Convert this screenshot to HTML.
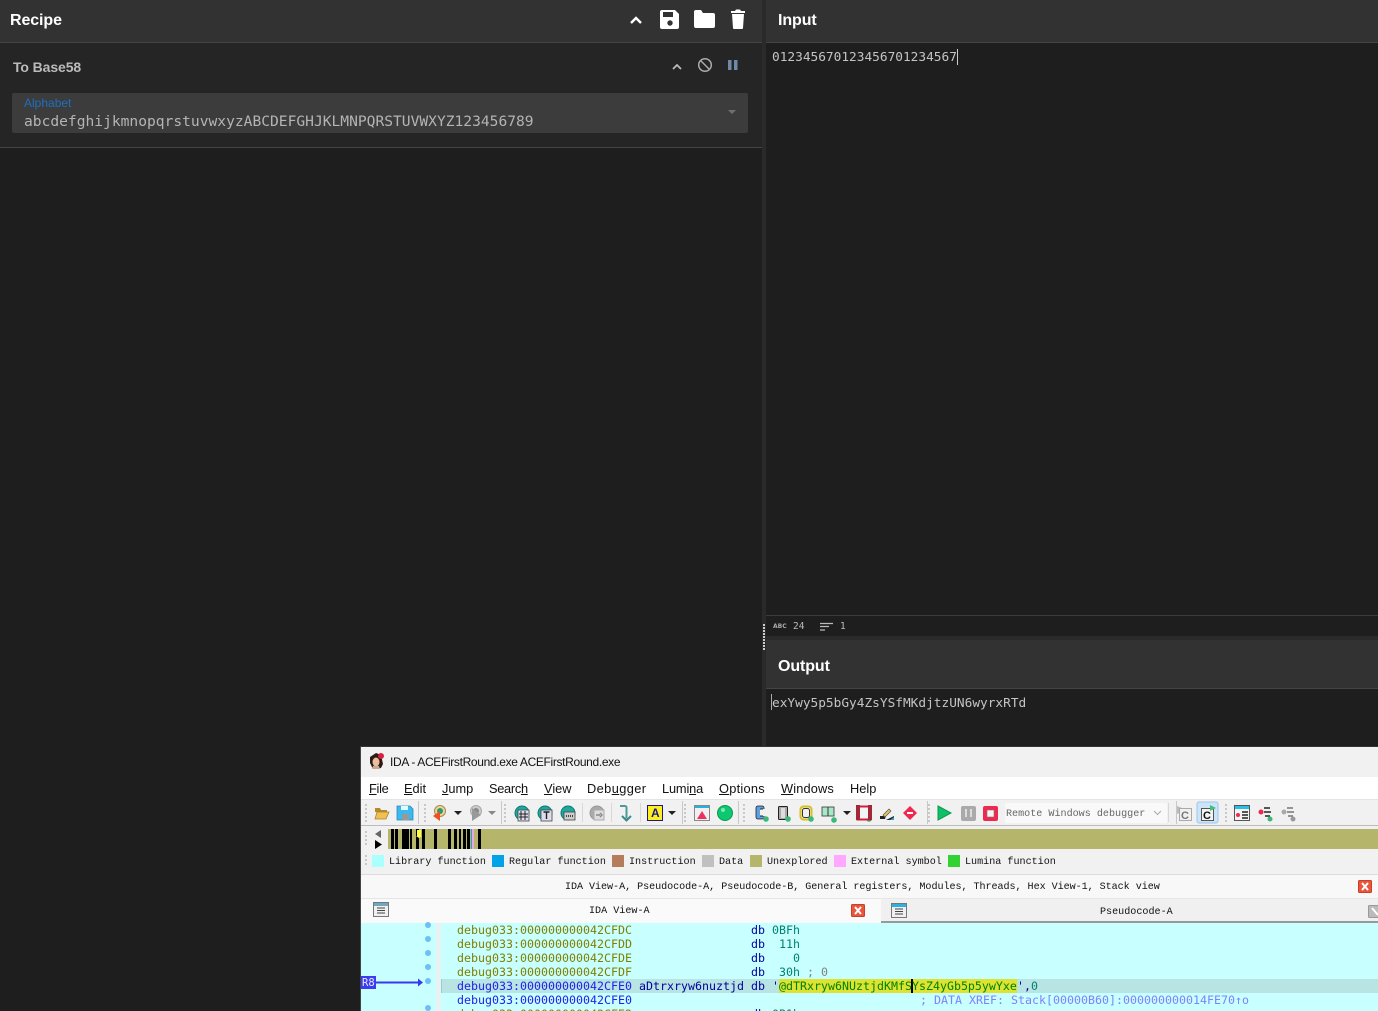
<!DOCTYPE html>
<html><head><meta charset="utf-8"><style>
html,body{margin:0;padding:0;width:1378px;height:1011px;overflow:hidden;background:#1e1e1e}
#w{position:relative;width:1378px;height:1011px;overflow:hidden;background:#1e1e1e}
.a{position:absolute}
.t{position:absolute;white-space:pre;line-height:1}
.h{font:bold 16px "Liberation Sans",sans-serif;color:#fff}
.m{font-family:"DejaVu Sans Mono",monospace}
.s{font-family:"Liberation Mono",monospace;font-size:10.1px;color:#111}
.mn{font:12.8px "Liberation Sans",sans-serif;color:#111}
.mn u{text-underline-offset:1px}
.c{font-family:"DejaVu Sans Mono",monospace;font-size:11.63px;line-height:14px;position:absolute;white-space:pre;height:14px}
.sw{position:absolute;width:12px;height:12px;top:855px}
svg{position:absolute;overflow:hidden}
</style></head><body><div id="w">
<div class="a" style="left:0;top:0;width:762px;height:42px;background:#323232"></div>
<div class="a" style="left:0;top:42px;width:762px;height:1px;background:#444"></div>
<div class="a" style="left:0;top:43px;width:762px;height:104px;background:#252525"></div>
<div class="a" style="left:0;top:147px;width:762px;height:1px;background:#444"></div>
<div class="a" style="left:762px;top:0;width:4px;height:747px;background:#2a2a2a"></div>
<div class="a" style="left:766px;top:0;width:612px;height:42px;background:#323232"></div>
<div class="a" style="left:766px;top:42px;width:612px;height:1px;background:#444"></div>
<div class="t h" style="left:10px;top:12px;letter-spacing:-.1px">Recipe</div>
<div class="t h" style="left:778px;top:12px;letter-spacing:-.1px">Input</div>
<svg style="left:0;top:0" width="762" height="150">
<path d="M631 23l5-5 5 5" fill="none" stroke="#fff" stroke-width="2.400"/>
<path d="M662 10h13l4 4v13a2 2 0 0 1-2 2h-15a2 2 0 0 1-2-2v-15a2 2 0 0 1 2-2z" fill="#fff"/><rect x="663" y="12" width="10" height="5" fill="#323232"/><circle cx="670" cy="23" r="2.700" fill="#323232"/>
<path d="M694 12a2 2 0 0 1 2-2h5l2 3h10a2 2 0 0 1 2 2v11a2 2 0 0 1-2 2h-17a2 2 0 0 1-2-2z" fill="#fff"/>
<path d="M731 11h4l1-1.500h4l1 1.500h4v2h-14zM732 14h12l-1 14a1 1 0 0 1-1 1h-8a1 1 0 0 1-1-1z" fill="#fff"/>
<path d="M673 69l4-4 4 4" fill="none" stroke="#bbb" stroke-width="1.800"/>
<circle cx="705" cy="65" r="6.300" fill="none" stroke="#aaa" stroke-width="1.500"/><path d="M700.500 60.500l9 9" stroke="#aaa" stroke-width="1.500"/>
<rect x="728" y="60" width="3.500" height="10" fill="#6f8aa8"/><rect x="734" y="60" width="3.500" height="10" fill="#6f8aa8"/>
</svg>
<div class="t" style="left:13px;top:59px;font:bold 14px 'Liberation Sans',sans-serif;color:#bbb;letter-spacing:-.1px">To Base58</div>
<div class="a" style="left:12px;top:93px;width:736px;height:40px;background:#3c3c3c;border-radius:2px"></div>
<div class="t" style="left:24px;top:96px;font:12px 'Liberation Sans',sans-serif;color:#1f6fc0">Alphabet</div>
<div class="t m" style="left:24px;top:115px;font-size:14.600px;color:#b4b4b4">abcdefghijkmnopqrstuvwxyzABCDEFGHJKLMNPQRSTUVWXYZ123456789</div>
<svg style="left:728px;top:110px" width="10" height="5"><path d="M0 0h8l-4 4z" fill="#6e6e78"/></svg>
<div class="t m" style="left:772px;top:52px;font-size:12.800px;color:#c4c4c4">012345670123456701234567</div>
<div class="a" style="left:957px;top:49px;width:1px;height:16px;background:#ccc"></div>
<div class="a" style="left:766px;top:615px;width:612px;height:1px;background:#3c3c3c"></div>
<div class="t" style="left:773px;top:623px;font:bold 6px 'DejaVu Sans',sans-serif;color:#aaa">ABC</div>
<div class="t m" style="left:793px;top:622px;font-size:9.500px;color:#bbb">24</div>
<svg style="left:820px;top:622px" width="14" height="10"><path d="M0 1.500h13M0 4.500h9M0 8h5" stroke="#bbb" stroke-width="1.200"/></svg>
<div class="t m" style="left:840px;top:622px;font-size:9.500px;color:#bbb">1</div>
<div class="a" style="left:766px;top:636px;width:612px;height:4px;background:#2a2a2a"></div>
<div class="a" style="left:763px;top:624px;width:2px;height:2px;background:#ccc;box-shadow:0 3px #ccc,0 6px #ccc,0 9px #ccc,0 12px #ccc,0 15px #ccc,0 18px #ccc,0 21px #ccc,0 24px #ccc"></div>
<div class="a" style="left:766px;top:640px;width:612px;height:48px;background:#323232"></div>
<div class="a" style="left:766px;top:688px;width:612px;height:1px;background:#444"></div>
<div class="t h" style="left:778px;top:658px;letter-spacing:-.1px">Output</div>
<div class="a" style="left:771px;top:694px;width:1px;height:16px;background:#aaa"></div>
<div class="t m" style="left:772px;top:698px;font-size:12.800px;color:#c4c4c4">exYwy5p5bGy4ZsYSfMKdjtzUN6wyrxRTd</div>

<!-- IDA window -->
<div class="a" style="left:360px;top:746px;width:1018px;height:265px;background:#f1f1f1;border-left:1px solid #444;border-top:1px solid #333;box-sizing:border-box"></div>
<svg style="left:368px;top:752px" width="18" height="18"><path d="M2 5l6-4 5 2 2 9-2 4-8 1-3-6z" fill="#2c1a14"/><ellipse cx="8" cy="10" rx="3.500" ry="4.500" fill="#e8c0a0"/><circle cx="13" cy="4" r="3" fill="#d8203c"/><path d="M5 14l6 0 1 3h-8z" fill="#c8a890"/></svg>
<div class="t" style="left:390px;top:755px;font:12px 'Liberation Sans',sans-serif;letter-spacing:-.34px;color:#111">IDA - ACEFirstRound.exe ACEFirstRound.exe</div>
<div class="a" style="left:361px;top:777px;width:1017px;height:22px;background:#fff"></div>
<div class="t mn" style="left:369px;top:781px;letter-spacing:-.3px"><u>F</u>ile</div>
<div class="t mn" style="left:404px;top:781px"><u>E</u>dit</div>
<div class="t mn" style="left:442px;top:781px"><u>J</u>ump</div>
<div class="t mn" style="left:489px;top:781px;letter-spacing:-.3px">Searc<u>h</u></div>
<div class="t mn" style="left:544px;top:781px"><u>V</u>iew</div>
<div class="t mn" style="left:587px;top:781px;letter-spacing:.4px">Deb<u>u</u>gger</div>
<div class="t mn" style="left:662px;top:781px;letter-spacing:-.15px">Lumi<u>n</u>a</div>
<div class="t mn" style="left:719px;top:781px;letter-spacing:.25px"><u>O</u>ptions</div>
<div class="t mn" style="left:781px;top:781px;letter-spacing:.15px"><u>W</u>indows</div>
<div class="t mn" style="left:850px;top:781px">Help</div>

<div class="a" style="left:361px;top:799px;width:1017px;height:1px;background:#e4e4e4"></div>
<div class="a" style="left:361px;top:825px;width:1017px;height:1px;background:#bcbcbc"></div>
<svg style="left:0;top:0" width="1378" height="1011">
<g stroke="#c8c8c8"><path d="M418.500 801v23M501.500 801v23M682.500 801v23M738.500 801v23M927.500 801v23M1176.500 801v23"/></g>
<g stroke="#d8d8d8"><path d="M582.500 803v19M611.500 803v19M640.500 803v19M1168.500 803v19"/></g>
<g fill="#bbb"><circle cx="366" cy="805" r="1"/><circle cx="366" cy="809" r="1"/><circle cx="366" cy="813" r="1"/><circle cx="366" cy="817" r="1"/><circle cx="366" cy="821" r="1"/>
<circle cx="425" cy="805" r="1"/><circle cx="425" cy="809" r="1"/><circle cx="425" cy="813" r="1"/><circle cx="425" cy="817" r="1"/><circle cx="425" cy="821" r="1"/>
<circle cx="505" cy="805" r="1"/><circle cx="505" cy="809" r="1"/><circle cx="505" cy="813" r="1"/><circle cx="505" cy="817" r="1"/><circle cx="505" cy="821" r="1"/>
<circle cx="685" cy="805" r="1"/><circle cx="685" cy="809" r="1"/><circle cx="685" cy="813" r="1"/><circle cx="685" cy="817" r="1"/><circle cx="685" cy="821" r="1"/>
<circle cx="744" cy="805" r="1"/><circle cx="744" cy="809" r="1"/><circle cx="744" cy="813" r="1"/><circle cx="744" cy="817" r="1"/><circle cx="744" cy="821" r="1"/>
<circle cx="929" cy="805" r="1"/><circle cx="929" cy="809" r="1"/><circle cx="929" cy="813" r="1"/><circle cx="929" cy="817" r="1"/><circle cx="929" cy="821" r="1"/>
<circle cx="1226" cy="805" r="1"/><circle cx="1226" cy="809" r="1"/><circle cx="1226" cy="813" r="1"/><circle cx="1226" cy="817" r="1"/><circle cx="1226" cy="821" r="1"/>
<circle cx="366" cy="832" r="1"/><circle cx="366" cy="836" r="1"/><circle cx="366" cy="840" r="1"/><circle cx="366" cy="844" r="1"/>
<circle cx="366" cy="856" r="1"/><circle cx="366" cy="860" r="1"/><circle cx="366" cy="864" r="1"/></g>
<path d="M375 808h5l1 2h6v2h-12z" fill="#b68a2c"/><path d="M375 819l2-7h12l-3 7z" fill="#f0c050" stroke="#a8822c" stroke-width=".8"/>
<path d="M397 806h13l3 3v11h-16z" fill="#3cb8ee" stroke="#238ac0" stroke-width=".8"/><rect x="401" y="806" width="7" height="4" fill="#dff"/><rect x="402" y="814" width="7" height="6" fill="#999"/>
<circle cx="440" cy="811" r="5.500" fill="#e8d8a0" stroke="#a88a40"/><circle cx="440" cy="811" r="3" fill="#2c9a70"/><path d="M433 816l7-5v10z" fill="#f05020"/>
<path d="M454 811h8l-4 4z" fill="#222"/>
<circle cx="476" cy="811" r="5.500" fill="#ccc" stroke="#aaa"/><circle cx="476" cy="811" r="3" fill="#888"/><path d="M472 808l9 7-9 6z" fill="#999"/>
<path d="M488 811h8l-4 4z" fill="#888"/>
<g fill="#1ea89e" stroke="#0c7a72"><circle cx="522" cy="813" r="7"/><circle cx="545" cy="813" r="7"/><circle cx="568" cy="813" r="7"/></g>
<rect x="518" y="810" width="11" height="11" fill="#dde" stroke="#444" stroke-width=".8"/><path d="M521 811v9M525 811v9M519 814h9M519 817h9" stroke="#222"/>
<rect x="541" y="810" width="11" height="11" fill="#dde" stroke="#444" stroke-width=".8"/><path d="M543.500 812h6M546.500 812v7" stroke="#222" stroke-width="1.400"/>
<rect x="564" y="812" width="11" height="8" fill="#ccc" stroke="#444" stroke-width=".8"/><path d="M566 816h7" stroke="#444" stroke-width="2" stroke-dasharray="1 1"/>
<circle cx="597" cy="813" r="7" fill="#aaa" stroke="#999"/><rect x="594" y="810" width="10" height="10" fill="#ddd" stroke="#aaa"/><path d="M596 815h4M600 813l2 2-2 2" stroke="#888" fill="none" stroke-width="1.400"/>
<path d="M620 806h5a1.500 1.500 0 0 1 1.500 1.500v11" fill="none" stroke="#4a9a9a" stroke-width="2"/><path d="M622 816l4.500 4.500 4.500-4.500" fill="none" stroke="#3a8a8a" stroke-width="2"/>
<rect x="647.500" y="805.500" width="15" height="15" fill="#ffef20" stroke="#1a1a80"/><text x="651" y="817" font-family="Liberation Sans" font-weight="bold" font-size="12" fill="#1a1a90">A</text>
<path d="M668 811h8l-4 4z" fill="#222"/>
<rect x="694.500" y="805.500" width="15" height="15" fill="#f0f0f0" stroke="#888"/><rect x="695" y="806" width="14" height="2" fill="#28b0e0"/><path d="M697 819l5-8 5 8z" fill="#f03060"/>
<circle cx="725" cy="813" r="7.500" fill="#0cc870" stroke="#0a9a50"/><circle cx="723" cy="810" r="2" fill="#7fe8b0"/>
<rect x="756" y="806" width="8" height="13" rx="2" fill="#5ca0e0" stroke="#222" stroke-width=".8"/><rect x="760" y="809" width="5" height="7" fill="#f1f1f1"/><path d="M760 809h3M760 816h3" stroke="#222"/>
<rect x="778.500" y="806.500" width="9" height="13" rx="1" fill="#aaa" stroke="#222"/><rect x="781" y="808" width="4" height="10" fill="#ddd"/>
<rect x="800.500" y="806.500" width="11" height="13" rx="3" fill="#f1f1f1" stroke="#d8c020" stroke-width="2"/><rect x="802.500" y="808.500" width="7" height="9" rx="2" fill="none" stroke="#333"/>
<rect x="822" y="807" width="12" height="9" fill="#a8e8c8" stroke="#333" stroke-width=".8"/><path d="M828 807v9" stroke="#333"/>
<g fill="#3cb878"><circle cx="766" cy="819" r="2.800"/><circle cx="788" cy="819" r="2.800"/><circle cx="811" cy="819" r="2.800"/><circle cx="834" cy="820" r="2.800"/><circle cx="869" cy="819" r="2.800"/></g>
<path d="M843 811h8l-4 4z" fill="#222"/>
<rect x="857.500" y="806.500" width="13" height="13" fill="#f4f4f4" stroke="#d02040" stroke-width="2"/><path d="M856 805h4v15h-4zM868 805h4v15h-4z" fill="#a02838"/>
<path d="M880 819v-3h6l-1 3zM886 820h8v-4z" fill="#222"/><path d="M883 815l6-6 2 2-6 6z" fill="#e8c060" stroke="#555" stroke-width=".7"/><path d="M890 820h4v-3z" fill="#2aa0d8"/>
<path d="M910 806l7 7-7 7-7-7z" fill="#f02850"/><rect x="907" y="812" width="6" height="2" fill="#fff"/>
<path d="M938 806l13 7-13 7z" fill="#10c068" stroke="#0a9a50"/>
<rect x="961" y="806" width="15" height="15" rx="2" fill="#aaa"/><path d="M966 809v8M971 809v8" stroke="#ddd" stroke-width="2"/>
<rect x="983" y="806" width="15" height="15" rx="2" fill="#f02850"/><rect x="987" y="810" width="7" height="7" fill="#f4f4f4" stroke="#777" stroke-width=".6"/>
<path d="M1177 806l5 2v4l-5 2z" fill="#bbb"/>
<rect x="1179.500" y="808.500" width="12" height="12" fill="#f0f0f0" stroke="#aaa"/><text x="1181" y="819" font-family="Liberation Sans" font-weight="bold" font-size="11" fill="#777">C</text>
<rect x="1197" y="802" width="21" height="21" rx="2" fill="#cce4f8" stroke="#9cc8ec"/>
<rect x="1201.500" y="808.500" width="12" height="12" fill="#f4f4f4" stroke="#555"/><text x="1203" y="819" font-family="Liberation Sans" font-weight="bold" font-size="11" fill="#111">C</text><path d="M1210 805l6 3-6 3z" fill="#3cc080"/>
<rect x="1234.500" y="805.500" width="15" height="15" fill="#f4f4f4" stroke="#555"/><rect x="1235" y="806" width="14" height="3" fill="#28c0e8"/><circle cx="1238" cy="815" r="2" fill="#f02850"/><path d="M1242 812h6M1242 815h6M1242 818h6" stroke="#222" stroke-width="1.400"/>
<circle cx="1261" cy="812" r="2.500" fill="#f02850"/><path d="M1264 808h6M1264 812h7M1265 816h5" stroke="#222" stroke-width="1.600"/><circle cx="1270" cy="819" r="2.500" fill="#3cb878"/>
<circle cx="1284" cy="812" r="2.500" fill="#aaa"/><path d="M1287 808h6M1287 812h7M1288 816h5" stroke="#777" stroke-width="1.600"/><circle cx="1293" cy="819" r="2.500" fill="#999"/>
<path d="M381 830v8l-6-4z" fill="#666"/><path d="M375 840v9l7-4.500z" fill="#000"/>
</svg>
<div class="a" style="left:1005px;top:803px;width:162px;height:20px;background:#f9f9f9;border-radius:2px"></div>
<div class="t" style="left:1006px;top:809px;font:10.100px 'Liberation Mono',monospace;color:#666">Remote Windows debugger</div>
<svg style="left:1150px;top:808px" width="16" height="10"><path d="M4 3l3.500 3.500 3.500-3.500" fill="none" stroke="#aaa"/></svg>
<div class="a" style="left:388px;top:829px;width:990px;height:20px;background:#b5b56c"></div>
<svg style="left:388px;top:829px" width="100" height="20" shape-rendering="crispEdges"><g fill="#000"><rect x="3" width="3" height="20"/><rect x="7" width="3" height="20"/><rect x="14" width="3" height="20"/><rect x="17" width="4" height="20"/><rect x="22" width="2" height="20"/><rect x="28" width="3" height="20"/><rect x="34" width="3" height="20"/><rect x="46" width="3" height="20"/><rect x="60" width="3" height="20"/><rect x="66" width="3" height="20"/><rect x="71" width="2" height="20"/><rect x="75" width="3" height="20"/><rect x="79" width="3" height="20"/><rect x="90" width="3" height="20"/></g><rect x="83" width="1" height="20" fill="#28a0d8"/><rect x="84" width="2" height="20" fill="#e8a8e8"/><path d="M29 1h4v6h1l-3 2-3-2h1z" fill="#ffff40" shape-rendering="auto"/></svg>
<div class="sw" style="left:372px;background:#aaffff"></div><div class="t s" style="left:389px;top:858px">Library function</div>
<div class="sw" style="left:492px;background:#00a2e8"></div><div class="t s" style="left:509px;top:858px">Regular function</div>
<div class="sw" style="left:612px;background:#b47c5a"></div><div class="t s" style="left:629px;top:858px">Instruction</div>
<div class="sw" style="left:702px;background:#c0c0c0"></div><div class="t s" style="left:719px;top:858px">Data</div>
<div class="sw" style="left:750px;background:#b5b56c"></div><div class="t s" style="left:767px;top:858px">Unexplored</div>
<div class="sw" style="left:834px;background:#ffa8ff"></div><div class="t s" style="left:851px;top:858px">External symbol</div>
<div class="sw" style="left:948px;background:#32d232"></div><div class="t s" style="left:965px;top:858px">Lumina function</div>
<div class="a" style="left:361px;top:874px;width:1017px;height:1px;background:#dcdcdc"></div>
<div class="a" style="left:361px;top:875px;width:1017px;height:23px;background:#f8f8f8"></div>
<div class="a" style="left:361px;top:898px;width:1017px;height:1px;background:#e6e6e6"></div>
<div class="t s" style="left:565px;top:883px;letter-spacing:-.05px">IDA View-A, Pseudocode-A, Pseudocode-B, General registers, Modules, Threads, Hex View-1, Stack view</div>
<div class="a" style="left:361px;top:899px;width:520px;height:24px;background:#fafafa"></div>
<div class="a" style="left:881px;top:900px;width:497px;height:21px;background:#f0f0f0;border-bottom:2px solid #999"></div>
<div class="t s" style="left:589px;top:907px">IDA View-A</div>
<div class="t s" style="left:1100px;top:908px">Pseudocode-A</div>
<svg style="left:0;top:0" width="1378" height="1011">
<rect x="1358.500" y="880.500" width="13" height="12" rx="1" fill="#e8563c" stroke="#c84028"/><path d="M1362 883l6 7M1368 883l-6 7" stroke="#fff" stroke-width="2"/>
<rect x="851.500" y="904.500" width="13" height="12" rx="1" fill="#e8563c" stroke="#c84028"/><path d="M855 907l6 7M861 907l-6 7" stroke="#fff" stroke-width="2"/>
<rect x="1368.500" y="905.500" width="13" height="12" rx="1" fill="#bbb" stroke="#999"/><path d="M1372 908l6 7" stroke="#fff" stroke-width="2"/>
<rect x="373.500" y="902.500" width="15" height="14" fill="#f0f0f0" stroke="#777"/><rect x="374" y="903" width="14" height="3" fill="#70a8c0"/><path d="M377 908h8M377 910.500h8M377 913h8" stroke="#444"/>
<rect x="891.500" y="903.500" width="15" height="14" fill="#f0f0f0" stroke="#777"/><rect x="892" y="904" width="14" height="3" fill="#30b0e0"/><path d="M895 909h8M895 911.500h8M895 914h8" stroke="#444"/>
</svg>
<div class="a" style="left:361px;top:923px;width:1017px;height:88px;background:#c8ffff"></div>
<div class="a" style="left:436px;top:923px;width:5px;height:88px;background:#e8f2f2"></div>
<div class="a" style="left:441px;top:979px;width:937px;height:14px;background:#b8e4e4"></div>
<div class="a" style="left:441px;top:979px;width:1px;height:14px;background:#9cc"></div>
<div class="a" style="left:779px;top:979px;width:238px;height:14px;background:#dde332"></div>
<div class="a" style="left:911px;top:979px;width:2px;height:14px;background:#000"></div>
<svg style="left:0;top:0" width="1378" height="1011"><g fill="#6cc0f4"><circle cx="428" cy="925" r="3"/><circle cx="428" cy="939" r="3"/><circle cx="428" cy="953" r="3"/><circle cx="428" cy="967" r="3"/><circle cx="428" cy="981" r="3"/><circle cx="428" cy="1008" r="3"/></g>
<path d="M376 982.500h42" stroke="#3838f0" stroke-width="2"/><path d="M418 978.500l5 4-5 4z" fill="#3838f0"/></svg>
<div class="a" style="left:361px;top:976px;width:15px;height:13px;background:#3c3cf0"></div>
<div class="t" style="left:362px;top:977px;font:10.500px 'DejaVu Sans Mono',monospace;color:#e8e8ff">R8</div>
<div class="c" style="left:457px;top:923px;color:#808000">debug033:000000000042CFDC</div><div class="c" style="left:751px;top:923px;color:#0000a0">db <span style="color:#008070">0BFh</span></div>
<div class="c" style="left:457px;top:937px;color:#808000">debug033:000000000042CFDD</div><div class="c" style="left:751px;top:937px;color:#0000a0">db  <span style="color:#008070">11h</span></div>
<div class="c" style="left:457px;top:951px;color:#808000">debug033:000000000042CFDE</div><div class="c" style="left:751px;top:951px;color:#0000a0">db    <span style="color:#008070">0</span></div>
<div class="c" style="left:457px;top:965px;color:#808000">debug033:000000000042CFDF</div><div class="c" style="left:751px;top:965px;color:#0000a0">db  <span style="color:#008070">30h</span> <span style="color:#808080">; 0</span></div>
<div class="c" style="left:457px;top:979px;color:#2020f0">debug033:000000000042CFE0 <span style="color:#0000a0">aDtrxryw6nuztjd db '</span><span style="color:#008000">@dTRxryw6NUztjdKMfSYsZ4yGb5p5ywYxe</span><span style="color:#0000a0">'</span><span style="color:#0000a0">,</span><span style="color:#008070">0</span></div>
<div class="c" style="left:457px;top:993px;color:#2020f0">debug033:000000000042CFE0</div>
<div class="c" style="left:920px;top:993px;color:#8080ff">; DATA XREF: Stack[00000B60]:000000000014FE70↑o</div>
<div class="c" style="left:457px;top:1007px;color:#808000">debug033:000000000042CFE2</div><div class="c" style="left:751px;top:1007px;color:#0000a0">db <span style="color:#008070">0B1h</span></div>
</div></body></html>
